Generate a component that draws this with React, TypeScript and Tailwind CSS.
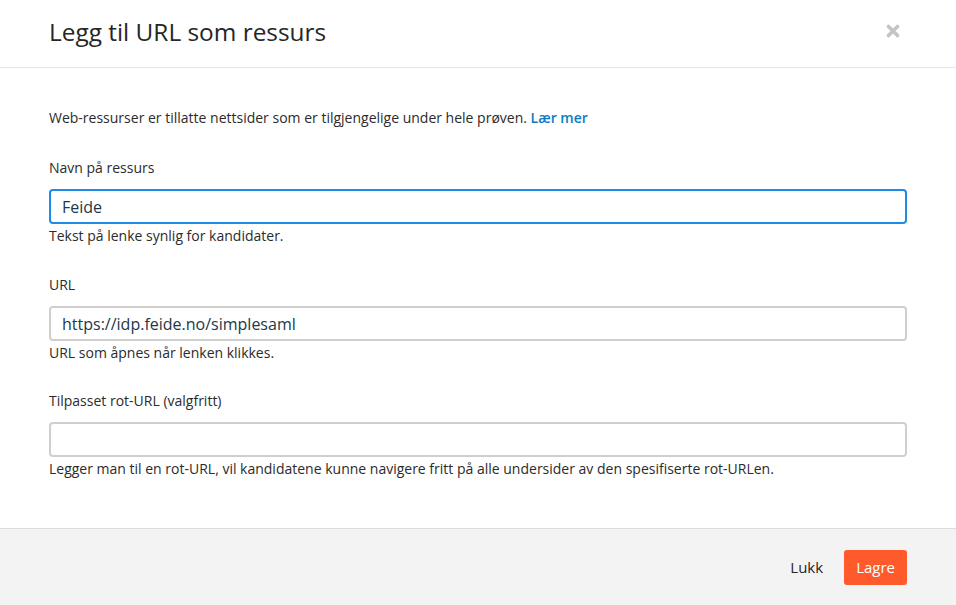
import React from "react";

export default function App() {
  const font = { fontFamily: '"Open Sans", "Noto Sans", sans-serif' };
  return (
    <div className="w-[956px] h-[605px] bg-white flex flex-col text-[#2b2b2b]" style={font}>
      <div className="h-[68px] border-b border-[#e6e6e6] flex items-center justify-between pl-[49px] pr-[56px] shrink-0">
        <h1 className="text-[24.4px] leading-[32px] text-[#262626] font-normal mb-[3px]">Legg til URL som ressurs</h1>
        <svg width="14" height="14" viewBox="0 0 14 14" className="mb-[6px]">
          <path d="M2.5 2.5 L11.5 11.5 M11.5 2.5 L2.5 11.5" stroke="#c4c4c4" strokeWidth="3.6" strokeLinecap="round" />
        </svg>
      </div>
      <div className="flex-1 pt-[40px] px-[49px] text-[14px] leading-[20px] text-[#2b2b2b]">
        <p>
          Web-ressurser er tillatte nettsider som er tilgjengelige under hele prøven.{" "}
          <a className="text-[#0a7bc5] font-semibold">Lær mer</a>
        </p>
        <div className="mt-[30px]">
          <div className="mb-[11px]">Navn på ressurs</div>
          <div className="h-[35px] w-[858px] border-2 border-[#1e8be6] rounded-[4px] flex items-center pl-[11px] text-[16px] text-[#22374a]">
            Feide
          </div>
          <div className="mt-[2px]">Tekst på lenke synlig for kandidater.</div>
        </div>
        <div className="mt-[29px]">
          <div className="mb-[11px]">URL</div>
          <div className="h-[35px] w-[858px] border-2 border-[#cfcfcf] rounded-[4px] flex items-center pl-[11px] text-[16px] text-[#22374a]">
            https://idp.feide.no/simplesaml
          </div>
          <div className="mt-[2px]">URL som åpnes når lenken klikkes.</div>
        </div>
        <div className="mt-[28px]">
          <div className="mb-[11px]">Tilpasset rot-URL (valgfritt)</div>
          <div className="h-[35px] w-[858px] border-2 border-[#cfcfcf] rounded-[4px]"></div>
          <div className="mt-[2px]">
            Legger man til en rot-URL, vil kandidatene kunne navigere fritt på alle undersider av den spesifiserte rot-URLen.
          </div>
        </div>
      </div>
      <div className="h-[77px] shrink-0 border-t border-[#dcdcdc] bg-[#f3f3f3] flex items-center justify-end pr-[49px] gap-[21px]">
        <span className="text-[15px] text-[#262626]">Lukk</span>
        <span className="h-[35px] px-[12px] bg-[#ff5a2c] rounded-[3px] text-white text-[15px] flex items-center">Lagre</span>
      </div>
    </div>
  );
}
